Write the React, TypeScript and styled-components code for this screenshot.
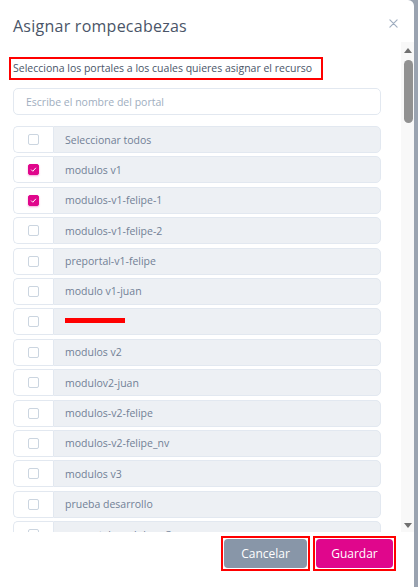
import React from "react";
import styled, { createGlobalStyle } from "styled-components";

const Global = createGlobalStyle`
  html, body { margin: 0; padding: 0; }
  body { background: #9aa3b0; font-family: "Open Sans", "Liberation Sans", sans-serif; }
  * { box-sizing: border-box; }
`;

const Modal = styled.div`
  width: 414px;
  height: 587px;
  background: #ffffff;
  border-top-right-radius: 6px;
  display: flex;
  flex-direction: column;
  overflow: hidden;
`;

const Header = styled.div`
  height: 42px;
  flex: 0 0 42px;
  display: flex;
  align-items: flex-start;
  justify-content: space-between;
  padding: 16px 16px 0 13px;
`;

const Title = styled.h2`
  margin: 0;
  font-size: 16px;
  font-weight: 500;
  color: #4a5568;
  line-height: 20px;
  letter-spacing: 0.25px;
`;

const Close = styled.button`
  border: none;
  background: none;
  padding: 0;
  margin-top: 3px;
  cursor: pointer;
  display: flex;
`;

const Body = styled.div`
  height: 490px;
  flex: 0 0 490px;
  display: flex;
`;

const Content = styled.div`
  flex: 1;
  overflow: hidden;
  padding: 15px 20px 0 13px;
`;

const Scrollbar = styled.div`
  width: 13px;
  flex: 0 0 13px;
  background: #f8f8f8;
  display: flex;
  flex-direction: column;
  align-items: center;
  padding: 5px 0 4px 1px;
`;

const Arrow = styled.div<{ $dir: "up" | "down" }>`
  width: 0;
  height: 0;
  border-left: 4.5px solid transparent;
  border-right: 4.5px solid transparent;
  ${(p) =>
    p.$dir === "up"
      ? "border-bottom: 5px solid #707070; margin-top: 1px;"
      : "border-top: 5px solid #707070; margin-top: auto;"}
`;

const Thumb = styled.div`
  width: 9px;
  height: 63px;
  margin-top: 7px;
  border-radius: 5px;
  background: #919191;
`;

const Subtitle = styled.div`
  width: fit-content;
  margin-left: -4px;
  padding: 2px 9px 3px 2px;
  border: 2px solid #ff0000;
  font-size: 10.5px;
  color: #4a5568;
  line-height: 14px;
`;

const Search = styled.input`
  display: block;
  width: 100%;
  height: 27px;
  margin-top: 8px;
  border: 1px solid #e2e8f0;
  border-radius: 5px;
  padding: 0 12px;
  font-family: inherit;
  font-size: 10.5px;
  color: #4a5568;
  outline: none;
  &::placeholder { color: #a0aec0; }
`;

const List = styled.div`
  display: flex;
  flex-direction: column;
  gap: 3.4px;
  margin-top: 11px;
`;

const Row = styled.label`
  display: flex;
  height: 27px;
  flex: 0 0 27px;
`;

const CheckCell = styled.div`
  width: 40px;
  flex: 0 0 40px;
  display: flex;
  align-items: center;
  justify-content: center;
  border: 1px solid #e2e8f0;
  border-right: none;
  border-radius: 5px 0 0 5px;
  background: #fff;
`;

const Box = styled.span<{ $checked: boolean }>`
  width: 11px;
  height: 11px;
  border-radius: 2px;
  border: 1px solid ${(p) => (p.$checked ? "#e0068c" : "#cbd5e0")};
  background: ${(p) => (p.$checked ? "#e0068c" : "#fff")};
  display: flex;
  align-items: center;
  justify-content: center;
  box-shadow: ${(p) => (p.$checked ? "0 1px 2px rgba(224,6,140,0.35)" : "none")};
`;

const LabelCell = styled.div`
  flex: 1;
  display: flex;
  align-items: center;
  padding-left: 11px;
  background: #edf0f4;
  border: 1px solid #e2e8f0;
  border-radius: 0 5px 5px 0;
  font-size: 10.5px;
  color: #718096;
`;

const Redacted = styled.span`
  display: inline-block;
  width: 60px;
  height: 5px;
  background: #ff0000;
  margin-top: -2px;
`;

const Footer = styled.div`
  flex: 1;
  display: flex;
  justify-content: flex-end;
  align-items: flex-start;
  gap: 3px;
  padding: 4px 18px 0 0;
`;

const Outline = styled.div`
  border: 2px solid #ff0000;
  padding: 1px;
`;

const Button = styled.button<{ $variant: "gray" | "pink" }>`
  height: 29px;
  border: none;
  border-radius: 4px;
  padding: 0;
  width: ${(p) => (p.$variant === "gray" ? "83px" : "77px")};
  background: ${(p) => (p.$variant === "gray" ? "#8896a8" : "#e0068c")};
  color: #fff;
  font-family: inherit;
  font-size: 12px;
  font-weight: 500;
  cursor: pointer;
`;

const Check = () => (
  <svg width="7" height="7" viewBox="0 0 10 10">
    <path d="M2 5.5 L4 7.5 L8 3" fill="none" stroke="#fff" strokeWidth="1.4" strokeLinecap="round" strokeLinejoin="round" />
  </svg>
);

const items: { label: string; checked?: boolean; redacted?: boolean }[] = [
  { label: "Seleccionar todos" },
  { label: "modulos v1", checked: true },
  { label: "modulos-v1-felipe-1", checked: true },
  { label: "modulos-v1-felipe-2" },
  { label: "preportal-v1-felipe" },
  { label: "modulo v1-juan" },
  { label: "", redacted: true },
  { label: "modulos v2" },
  { label: "modulov2-juan" },
  { label: "modulos-v2-felipe" },
  { label: "modulos-v2-felipe_nv" },
  { label: "modulos v3" },
  { label: "prueba desarrollo" },
  { label: "preportal-modulos-v3" },
];

export default function App() {
  return (
    <>
      <Global />
      <Modal>
        <Header>
          <Title>Asignar rompecabezas</Title>
          <Close aria-label="Cerrar">
            <svg width="9" height="9" viewBox="0 0 10 10">
              <path d="M1 1 L9 9 M9 1 L1 9" stroke="#a0aec0" strokeWidth="1.3" strokeLinecap="round" />
            </svg>
          </Close>
        </Header>
        <Body>
          <Content>
            <Subtitle>Selecciona los portales a los cuales quieres asignar el recurso</Subtitle>
            <Search placeholder="Escribe el nombre del portal" />
            <List>
              {items.map((it, i) => (
                <Row key={i}>
                  <CheckCell>
                    <Box $checked={!!it.checked}>{it.checked && <Check />}</Box>
                  </CheckCell>
                  <LabelCell>{it.redacted ? <Redacted /> : it.label}</LabelCell>
                </Row>
              ))}
            </List>
          </Content>
          <Scrollbar aria-hidden>
            <Arrow $dir="up" />
            <Thumb />
            <Arrow $dir="down" />
          </Scrollbar>
        </Body>
        <Footer>
          <Outline>
            <Button $variant="gray">Cancelar</Button>
          </Outline>
          <Outline>
            <Button $variant="pink">Guardar</Button>
          </Outline>
        </Footer>
      </Modal>
    </>
  );
}
